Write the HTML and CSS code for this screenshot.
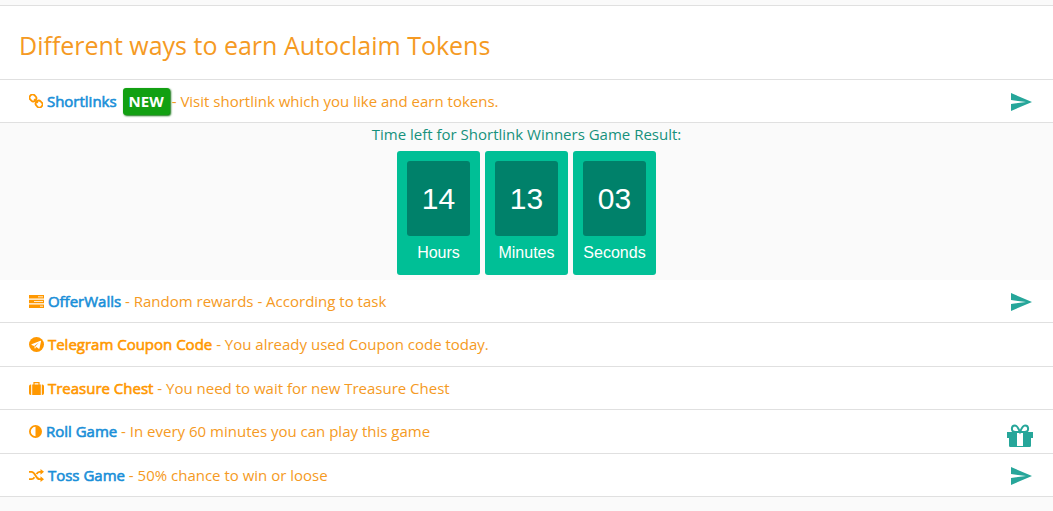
FILE: index.html
```html
<!DOCTYPE html>
<html lang="en">
<head>
    <meta charset="UTF-8">
    <meta name="viewport" content="width=device-width, initial-scale=1.0">
    <title>Autoclaim Tokens</title>
    <link rel="stylesheet" href="styles.css">
</head>
<body>
    <svg class="sprite" aria-hidden="true">
        <symbol id="send" viewBox="0 0 24 24"><path d="M2 21l21-9L2 3v7l15 2-15 2z"/></symbol>
    </svg>
    <main class="collection">
        <header class="collection-header">
            <h1>Different ways to earn Autoclaim Tokens</h1>
        </header>
        <div class="collection-item">
            <p>
                <svg class="icon link" viewBox="0 0 14 14" aria-hidden="true"><g transform="rotate(45 7 7)" fill="none" stroke="currentColor" stroke-width="1.8"><rect x="-.8" y="4" width="6.8" height="6" rx="2.6"/><rect x="8" y="4" width="6.8" height="6" rx="2.6"/><path d="M4.500 7h5"/></g></svg>
                <a class="name" href="#shortlinks">Shortlinks</a>
                <span class="badge">NEW</span>- Visit shortlink which you like and earn tokens.
            </p>
            <a class="action" href="#shortlinks" aria-label="Open Shortlinks"><svg viewBox="0 0 24 24"><use href="#send"/></svg></a>
        </div>
        <section class="timer">
            <p>Time left for Shortlink Winners Game Result:</p>
            <div class="clock">
                <div class="unit"><span class="value" id="hours">14</span><span class="label">Hours</span></div>
                <div class="unit"><span class="value" id="minutes">13</span><span class="label">Minutes</span></div>
                <div class="unit"><span class="value" id="seconds">03</span><span class="label">Seconds</span></div>
            </div>
        </section>
        <div class="collection-item">
            <p>
                <svg class="icon wide" viewBox="0 0 15 13" aria-hidden="true"><path d="M0 0h15v3.6H0zM0 4.7h15v3.6H0zM0 9.4h15V13H0z"/><path d="M9 1.8h5M5 6.5h9M11 11.2h3" stroke="#fff" stroke-width=".8"/></svg>
                <a class="name" href="#offerwalls">OfferWalls</a> - Random rewards - According to task
            </p>
            <a class="action" href="#offerwalls" aria-label="Open OfferWalls"><svg viewBox="0 0 24 24"><use href="#send"/></svg></a>
        </div>
        <div class="collection-item">
            <p>
                <svg class="icon round" viewBox="0 0 15 15" aria-hidden="true"><circle cx="7.5" cy="7.5" r="7.5"/><path d="M2.6 7.3l8.8-3.5c.5-.1.7.2.6.7l-1.5 6.8c-.1.5-.4.6-.8.4L7.4 10l-1.2 1.6c-.3.2-.4.1-.5-.3L5 9 2.7 8.1c-.4-.2-.4-.6-.1-.8z" fill="#fff"/><path d="M5.3 9l4.6-3.4-3.6 4-.2 1.7z"/></svg>
                <b class="name">Telegram Coupon Code</b> - You already used Coupon code today.
            </p>
        </div>
        <div class="collection-item">
            <p>
                <svg class="icon wide" viewBox="0 0 15 13" aria-hidden="true"><path d="M2.2 2.5V13h-.5A1.7 1.7 0 0 1 0 11.3V4.2a1.7 1.7 0 0 1 1.7-1.7zM3.2 2.5h8.6V13H3.2zM12.8 2.5h.5A1.7 1.7 0 0 1 15 4.2v7.1a1.7 1.7 0 0 1-1.7 1.7h-.5z"/><path d="M5 3V.7h5V3" fill="none" stroke="currentColor" stroke-width="1.2"/></svg>
                <b class="name">Treasure Chest</b> - You need to wait for new Treasure Chest
            </p>
        </div>
        <div class="collection-item">
            <p>
                <svg class="icon" viewBox="0 0 13 13" aria-hidden="true"><circle cx="6.5" cy="6.5" r="5.6" fill="none" stroke="currentColor" stroke-width="1.8"/><path d="M6.5 1v11a5.5 5.5 0 0 0 0-11z"/></svg>
                <a class="name" href="#roll">Roll Game</a> - In every 60 minutes you can play this game
            </p>
            <a class="action gift" href="#roll" aria-label="Open Roll Game"><svg viewBox="0 0 26 24"><path d="M0 8h26v6H0zM2 14h22v7.5c0 1-.8 1.500-1.500 1.500h-19C2.800 23 2 22.500 2 21.500z"/><path d="M10 8.500h6V22h-6z" fill="#fff"/><path d="M13 8H8.500C3.500 8 4 1.500 8 1.500c2.500 0 3.500 3 5 6.500 1.500-3.500 2.500-6.500 5-6.500 4 0 4.500 6.500-.5 6.500z" fill="none" stroke="currentColor" stroke-width="2"/></svg></a>
        </div>
        <div class="collection-item">
            <p>
                <svg class="icon wide" viewBox="0 0 15 13" aria-hidden="true"><path d="M0 2.8h2.5C6.5 2.8 6.5 10.2 10.5 10.2H12M0 10.2h2.5c1.400 0 2.300-.9 3-2M7.500 5c.7-1.200 1.600-2.200 3-2.200H12" fill="none" stroke="currentColor" stroke-width="1.8"/><path d="M11.500 0L15 2.800l-3.500 2.900zM11.500 7.300L15 10.200 11.500 13z"/></svg>
                <a class="name" href="#toss">Toss Game</a> - 50% chance to win or loose
            </p>
            <a class="action" href="#toss" aria-label="Open Toss Game"><svg viewBox="0 0 24 24"><use href="#send"/></svg></a>
        </div>
    </main>
</body>
</html>
```
FILE: styles.css
```css
body {
    font-family: "Open Sans", sans-serif;
    font-size: 15px;
    line-height: 1.5;
    margin: 0;
    padding-top: 5px;
    background-color: #fafafa;
    color: #f59a23;
}
h1, p {
    margin: 0;
}
a {
    color: #1a8fd8;
    text-decoration: none;
}
.sprite {
    display: none;
}
.collection {
    border-top: 1px solid #e0e0e0;
}
.collection-header {
    padding: 23px 19px 17px;
    background-color: #fff;
    border-bottom: 1px solid #e0e0e0;
}
h1 {
    font-size: 25px;
    font-weight: 400;
    line-height: 1.3;
}
.collection-item {
    display: flex;
    justify-content: space-between;
    align-items: center;
    padding: 10px 20px 10px 29px;
    background-color: #fff;
    border-bottom: 1px solid #e0e0e0;
}
.name {
    font-weight: 400;
    -webkit-text-stroke: 0.04em currentColor;
}
b.name {
    color: #ff9800;
}
.icon {
    width: 13px;
    height: 13px;
    vertical-align: -1px;
    fill: currentColor;
    color: #ff9800;
}
.icon.wide {
    width: 15px;
}
.icon.link {
    width: 14px;
    height: 14px;
}
.icon.round {
    width: 15px;
    height: 15px;
    vertical-align: -2px;
}
.badge {
    display: inline-block;
    margin: -4px 2px;
    padding: 2px 6px 3px;
    background-color: #12a012;
    border-radius: 3px;
    box-shadow: 1px 1px 2px #0a700a;
    color: #fff;
    font-weight: 700;
}
.action {
    display: flex;
    color: #26a69a;
    margin: -1px 0 -3px;
}
.action svg {
    width: 24px;
    height: 24px;
    fill: currentColor;
}
.action.gift {
    margin: 3px 0 -7px;
}
.action.gift svg {
    width: 26px;
}
.timer {
    padding-bottom: 5px;
    text-align: center;
    color: #16917c;
}
.clock {
    display: flex;
    justify-content: center;
    gap: 5px;
    margin-top: 5px;
    font-family: "Liberation Sans", Arial, sans-serif;
    color: #fff;
}
.unit {
    display: flex;
    flex-direction: column;
    width: 63px;
    padding: 10px;
    background-color: #00bf96;
    border-radius: 3px;
}
.value {
    padding: 15px 0;
    background-color: #00816a;
    border-radius: 3px;
    font-size: 30px;
    line-height: 45px;
}
.label {
    margin: 5px -10px 0;
    font-size: 16px;
    line-height: 24px;
}
```
